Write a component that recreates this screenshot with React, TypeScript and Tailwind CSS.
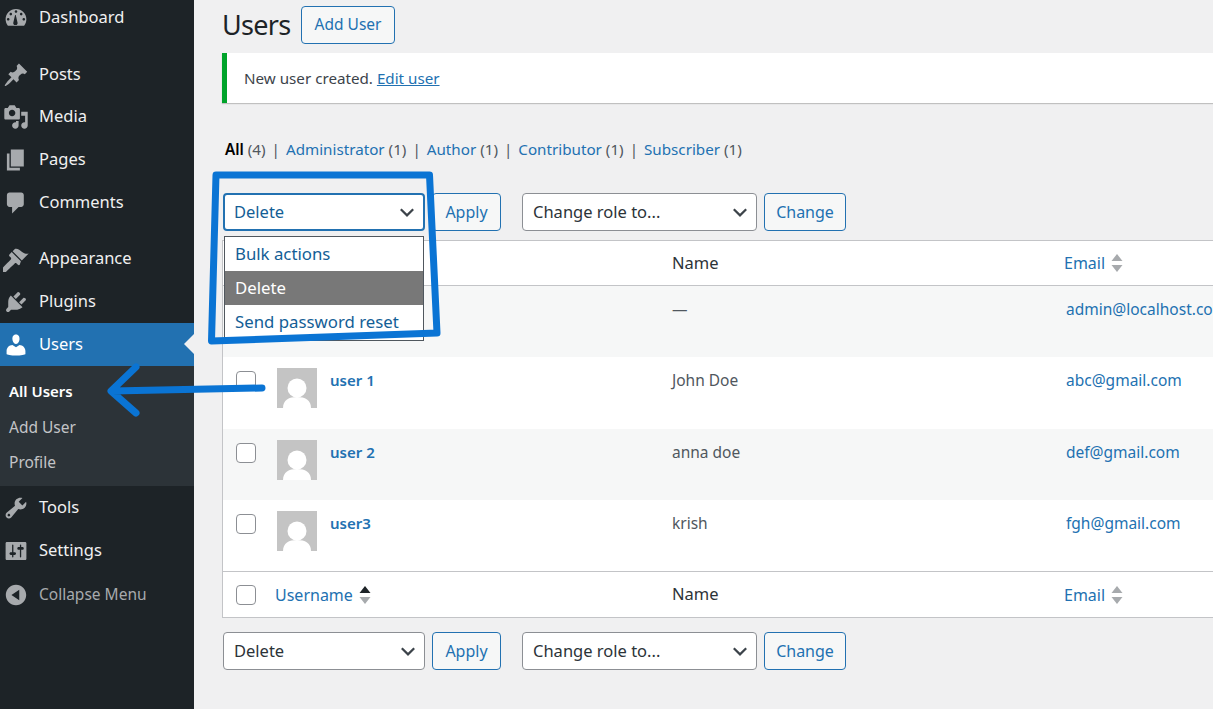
import React from "react";

const P: Record<string, string> = {
  dash: "M3.76 16h12.48c1.1-1.37 1.76-3.11 1.76-5 0-4.42-3.58-8-8-8s-8 3.58-8 8c0 1.89.66 3.63 1.76 5zM10 4c.55 0 1 .45 1 1s-.45 1-1 1-1-.45-1-1 .45-1 1-1zM6 6c.55 0 1 .45 1 1s-.45 1-1 1-1-.45-1-1 .45-1 1-1zm8 0c.55 0 1 .45 1 1s-.45 1-1 1-1-.45-1-1 .45-1 1-1zM4 10c.55 0 1 .45 1 1s-.45 1-1 1-1-.45-1-1 .45-1 1-1zm12 0c.55 0 1 .45 1 1s-.45 1-1 1-1-.45-1-1 .45-1 1-1zM8.6 15.400c-.5-.4-.8-1-.7-1.700l1.300-5.700c.1-.4.6-.4.700 0l1.300 5.700c.1.7-.2 1.300-.7 1.700z",
  pin: "M10.44 3.02l1.82-1.82 6.36 6.35-1.83 1.82c-1.05-.68-2.48-.57-3.41.36l-.75.75c-.92.93-1.04 2.35-.35 3.41l-1.83 1.82-2.41-2.41-2.8 2.79c-.42.42-3.38 2.71-3.8 2.29s1.86-3.39 2.28-3.81l2.79-2.79L4.1 9.36l1.83-1.82c1.05.69 2.48.57 3.4-.36l.75-.75c.93-.92 1.05-2.35.36-3.41z",
  media: "M13 11V4c0-.55-.45-1-1-1h-1.67L9 1H5L3.67 3H2c-.55 0-1 .45-1 1v7c0 .55.45 1 1 1h10c.55 0 1-.45 1-1zM7 4.5c1.38 0 2.5 1.12 2.5 2.5S8.38 9.5 7 9.5 4.5 8.38 4.5 7 5.62 4.5 7 4.5zM14 6h5v10.5c0 1.38-1.12 2.5-2.5 2.5S14 17.88 14 16.5s1.12-2.5 2.5-2.5c.17 0 .34.02.5.05V9h-3V6zm-4 8.05V13h2v3.5c0 1.38-1.12 2.5-2.5 2.5S7 17.88 7 16.5 8.12 14 9.5 14c.17 0 .34.02.5.05z",
  page: "M6 15V2h10v13H6zm-1 1h8v2H3V5h2v11z",
  comment: "M5 2h9c1.1 0 2 .9 2 2v7c0 1.1-.9 2-2 2h-2l-5 5v-5H5c-1.1 0-2-.9-2-2V4c0-1.1.9-2 2-2z",
  brush: "M14.48 11.06L7.41 3.99l1.5-1.5c.5-.56 2.3-.47 3.51.32 1.21.8 1.43 1.28 2.91 2.1 1.18.64 2.45 1.26 4.45.85zm-.71.71L6.7 4.7 4.93 6.47c-.39.39-.39 1.02 0 1.41l1.06 1.06c.39.39.39 1.03 0 1.42-.6.6-6.400 6.630-7 7.230-.77.77-.77 2.010 0 2.780.770.770 2.010.770 2.780 0 .6-.6 6.630-6.400 7.230-7 .390-.390 1.030-.390 1.420 0l1.060 1.060c.390.390 1.020.390 1.410 0z",
  plugin: "M13.11 4.36L9.87 7.6 8 5.73l3.24-3.24c.35-.34 1.05-.2 1.56.32.52.51.66 1.21.31 1.55zm-8 1.77l.91-1.12 9.01 9.01-1.19.84c-.71.71-2.63 1.16-3.82 1.16H6.14L4.9 17.26c-.59.59-1.54.59-2.12 0-.59-.58-.59-1.53 0-2.12l1.24-1.24v-3.88c0-1.13.4-3.19 1.09-3.89zm7.26 3.97l3.24-3.24c.34-.35 1.04-.21 1.55.31.52.51.66 1.21.31 1.55l-3.24 3.25z",
  user: "M10 9.25c-2.27 0-2.73-3.44-2.73-3.44C7 4.02 7.82 2 9.97 2c2.16 0 2.98 2.02 2.71 3.81 0 0-.41 3.44-2.68 3.44zm0 2.57L12.72 10c2.39 0 4.52 2.33 4.52 4.53v2.49s-3.65 1.13-7.24 1.13c-3.65 0-7.24-1.13-7.24-1.13v-2.49c0-2.25 1.94-4.48 4.47-4.48z",
  tools: "M16.68 9.77c-1.34 1.34-3.3 1.67-4.95.99l-5.41 6.52c-.99.99-2.59.99-3.58 0s-.99-2.59 0-3.57l6.52-5.42c-.68-1.65-.35-3.61.99-4.95 1.28-1.28 3.12-1.62 4.72-1.06l-2.89 2.89 2.82 2.82 2.86-2.87c.53 1.58.18 3.39-1.08 4.65zM3.81 16.21c.4.39 1.04.39 1.43 0 .4-.4.4-1.04 0-1.43-.39-.4-1.03-.4-1.43 0-.39.39-.39 1.03 0 1.43z",
  settings: "M18 16V4c0-.55-.45-1-1-1H3c-.55 0-1 .45-1 1v12c0 .55.45 1 1 1h14c.55 0 1-.45 1-1zM8 11h1c.55 0 1 .45 1 1s-.45 1-1 1H8v1.5c0 .28-.22.5-.5.5s-.5-.22-.5-.5V13H6c-.55 0-1-.45-1-1s.45-1 1-1h1V5.500c0-.28.22-.5.5-.5s.5.22.5.5V11zm5-2h-1c-.55 0-1-.45-1-1s.45-1 1-1h1V5.500c0-.28.22-.5.5-.5s.5.22.5.5V7h1c.55 0 1 .45 1 1s-.45 1-1 1h-1v5.500c0 .28-.22.5-.5.5s-.5-.22-.5-.5V9z",
  collapse: "M10 2.160c4.330 0 7.840 3.510 7.840 7.840s-3.510 7.840-7.840 7.840S2.160 14.330 2.160 10 5.670 2.160 10 2.160zM12.500 14V6l-6 4z",
};

function Dash({ name, white }: { name: string; white?: boolean }) {
  return (
    <svg viewBox="0 0 20 20" className={white ? "w-[26px] h-[26px] fill-white shrink-0" : "w-[26px] h-[26px] fill-[#a7aaad] shrink-0"}>
      <path d={P[name]} fillRule="evenodd" />
    </svg>
  );
}

function Item({ icon, label, className = "" }: { icon: string; label: string; className?: string }) {
  return (
    <div className={"flex items-center h-[43px] pl-[3px] gap-[10px] text-[16.5px] text-[#f0f0f1] " + className}>
      <Dash name={icon} />
      <span>{label}</span>
    </div>
  );
}

function Chevron() {
  return (
    <svg viewBox="0 0 16 16" className="w-[18px] h-[18px] fill-none stroke-[#3c434a] stroke-[2px] shrink-0">
      <path d="M2.500 5.500L8 11l5.500-5.500" />
    </svg>
  );
}

function Select({ label, w, active }: { label: string; w: string; active?: boolean }) {
  return (
    <div className={"h-[38px] bg-white rounded-[4px] flex items-center justify-between pr-[7px] text-[16.5px] " + w + " " + (active ? "pl-[9px] border-2 border-[#2271b1] text-[#135e96]" : "pl-[10px] border border-[#8c8f94] text-[#2c3338]")}>
      <span>{label}</span>
      <Chevron />
    </div>
  );
}

function Btn({ label, w, className = "text-[16px]" }: { label: string; w: string; className?: string }) {
  return (
    <div className={"h-[38px] rounded-[4px] border border-[#2271b1] bg-[#f6f7f7] text-[#2271b1] flex items-center justify-center " + className + " " + w}>{label}</div>
  );
}

function Check() {
  return <div className="w-[20px] h-[20px] rounded-[4px] border border-[#8c8f94] bg-white shrink-0" />;
}

function Sort({ active }: { active?: boolean }) {
  return (
    <svg viewBox="0 0 12 20" className="w-[12px] h-[20px] shrink-0 ml-[6px]">
      <path d="M6 1l5.500 7H.5z" className={active ? "fill-[#1d2327]" : "fill-[#a7aaad]"} />
      <path d="M6 19l5.500-7H.5z" className="fill-[#a7aaad]" />
    </svg>
  );
}

function Avatar() {
  return (
    <svg viewBox="0 0 40 40" className="w-[40px] h-[40px] shrink-0 bg-[#c4c4c4]">
      <circle cx="20" cy="20" r="9.500" fill="#fff" />
      <path d="M6 40c0-8 6-11 14-11s14 3 14 11z" fill="#fff" />
    </svg>
  );
}

function Row({ name, full, email, alt }: { name: string; full: string; email: string; alt?: boolean }) {
  return (
    <div className={"h-[71.25px] flex text-[15.5px] " + (alt ? "bg-[#f6f7f7]" : "bg-white")}>
      <div className="w-[54px] pl-[13px] pt-[14px]"><Check /></div>
      <div className="w-[395px] flex pt-[11px] gap-[13px]">
        <Avatar />
        <a className="font-semibold text-[15px] text-[#2271b1] leading-[24px]">{name}</a>
      </div>
      <div className="w-[394px] pt-[11px] leading-[24px] text-[#50575e]">{full}</div>
      <div className="flex-1 pt-[11px] leading-[24px] text-[#2271b1] whitespace-nowrap">{email}</div>
    </div>
  );
}

function HeadRow({ border }: { border: string }) {
  return (
    <div className={"flex items-center bg-white text-[16px] " + border}>
      <div className="w-[52px] pl-[13px]"><Check /></div>
      <div className="w-[397px] flex items-center text-[#2271b1]">Username<Sort active /></div>
      <div className="w-[392px] text-[#2c3338] text-[16.5px]">Name</div>
      <div className="flex-1 flex items-center text-[#2271b1]">Email<Sort /></div>
    </div>
  );
}

function Filter({ label, n, first }: { label: string; n: number; first?: boolean }) {
  return (
    <span>
      {first ? <b className="font-semibold text-black">{label}</b> : <a className="text-[#2271b1]">{label}</a>}
      <span className="text-[#50575e]"> ({n})</span>
    </span>
  );
}

export default function App() {
  return (
    <div className="w-[1213px] h-[709px] overflow-hidden flex bg-[#f0f0f1] relative" style={{ fontFamily: '"Noto Sans", sans-serif' }}>
      <aside className="w-[194px] shrink-0 bg-[#1d2327] -mt-[4px] h-[713px]">
        <Item icon="dash" label="Dashboard" className="mb-[14px]" />
        <Item icon="pin" label="Posts" className="-mb-[1px]" />
        <Item icon="media" label="Media" />
        <Item icon="page" label="Pages" />
        <Item icon="comment" label="Comments" className="mb-[13px]" />
        <Item icon="brush" label="Appearance" />
        <Item icon="plugin" label="Plugins" />
        <div className="relative flex items-center h-[43px] pl-[3px] gap-[10px] text-[16.5px] text-white bg-[#2271b1]">
          <Dash name="user" white />
          <span>Users</span>
          <div className="absolute right-0 top-[11px] w-0 h-0 border-y-[10px] border-y-transparent border-r-[10px] border-r-[#f0f0f1]" />
        </div>
        <div className="h-[120px] bg-[#2c3338] pl-[9px] text-[15.5px] text-[#c3c4c7] flex flex-col pt-[7px]">
          <div className="h-[37px] flex items-center font-semibold text-[15px] text-white">All Users</div>
          <div className="h-[35px] flex items-center">Add User</div>
          <div className="h-[35px] flex items-center">Profile</div>
        </div>
        <Item icon="tools" label="Tools" />
        <Item icon="settings" label="Settings" />
        <div className="flex items-center h-[45px] pl-[3px] gap-[10px] text-[15.5px] text-[#a7aaad]">
          <Dash name="collapse" />
          <span>Collapse Menu</span>
        </div>
      </aside>

      <main className="flex-1 min-w-0 pl-[28px] pt-[6px]">
        <div className="flex items-center h-[38px] gap-[11px]">
          <h1 className="w-[68px] text-[27px] leading-[38px] tracking-[-0.7px] text-[#1d2327] whitespace-nowrap">Users</h1>
          <Btn label="Add User" w="w-[94px]" className="text-[15.5px]" />
        </div>
        <div className="mt-[9px] h-[50px] bg-white border-l-[5px] border-l-[#00a32a] shadow-[0_1px_1px_rgba(0,0,0,0.2)] flex items-center pl-[17px] text-[15.2px] text-[#3c434a]">
          New user created.&nbsp;<a className="text-[#2271b1] underline">Edit user</a>
        </div>
        <div className="mt-[34px] h-[24px] flex items-center gap-[6px] pl-[3px] text-[15.2px] text-[#50575e] whitespace-nowrap">
          <Filter label="All" n={4} first /><span>|</span>
          <Filter label="Administrator" n={1} /><span>|</span>
          <Filter label="Author" n={1} /><span>|</span>
          <Filter label="Contributor" n={1} /><span>|</span>
          <Filter label="Subscriber" n={1} />
        </div>
        <div className="mt-[32px] pl-[1px] flex">
          <Select label="Delete" w="w-[202px]" active />
          <Btn label="Apply" w="w-[69px] ml-[7px]" />
          <Select label="Change role to..." w="w-[235px] ml-[21px]" />
          <Btn label="Change" w="w-[82px] ml-[7px]" />
        </div>
        <div className="mt-[9px] w-[1040px] border border-[#c3c4c7]">
          <HeadRow border="h-[45px] border-b border-b-[#c3c4c7]" />
          <Row name="admin" full="—" email="admin@localhost.com" alt />
          <Row name="user 1" full="John Doe" email="abc@gmail.com" />
          <Row name="user 2" full="anna doe" email="def@gmail.com" alt />
          <Row name="user3" full="krish" email="fgh@gmail.com" />
          <HeadRow border="h-[46px] border-t border-t-[#c3c4c7]" />
        </div>
        <div className="mt-[14px] pl-[1px] flex">
          <Select label="Delete" w="w-[202px]" />
          <Btn label="Apply" w="w-[69px] ml-[7px]" />
          <Select label="Change role to..." w="w-[235px] ml-[21px]" />
          <Btn label="Change" w="w-[82px] ml-[7px]" />
        </div>
      </main>

      <div className="absolute left-[224px] top-[236px] w-[200px] h-[105px] bg-white border border-[#50575e] text-[16.8px] text-[#135e96]">
        <div className="h-[34px] flex items-center pl-[10px]">Bulk actions</div>
        <div className="h-[34px] flex items-center pl-[10px] bg-[#787878] text-white">Delete</div>
        <div className="h-[34px] flex items-center pl-[10px]">Send password reset</div>
      </div>

      <svg viewBox="0 0 1213 709" className="absolute inset-0 w-[1213px] h-[709px] pointer-events-none fill-none stroke-[#0a74d4] [stroke-linejoin:round] [stroke-linecap:round]">
        <path d="M216 175L429.500 175L437 333L211.500 341z" strokeWidth="7" />
        <path d="M262 388L112 391M136 367L111 391L136 413" strokeWidth="7" />
      </svg>
    </div>
  );
}
